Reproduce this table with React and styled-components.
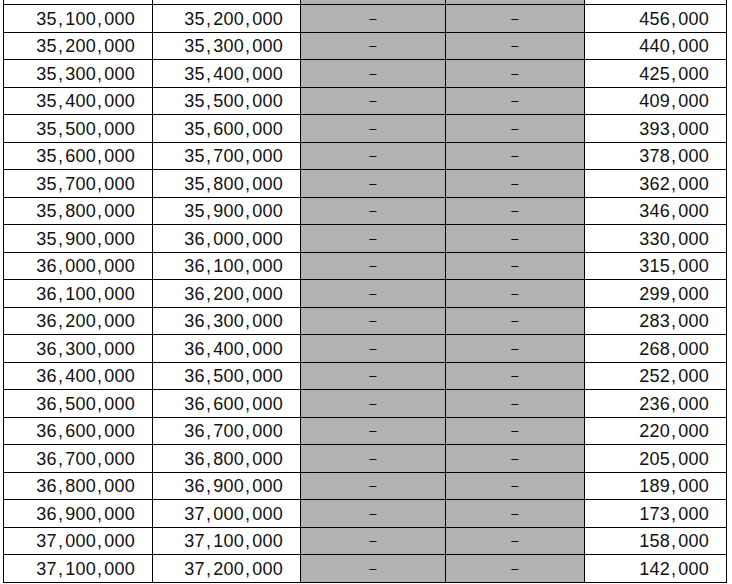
import React from "react";
import styled, { createGlobalStyle } from "styled-components";

const GlobalStyle = createGlobalStyle`
  html, body {
    margin: 0;
    padding: 0;
    background: #ffffff;
    overflow: hidden;
  }
  body {
    font-family: "Liberation Sans", Arial, sans-serif;
  }
`;

const Sheet = styled.div`
  margin-top: -23px;
  margin-left: 3px;
  display: flex;
  flex-direction: column;
  gap: 1px;
  width: fit-content;
  padding: 1px;
  background: #000000;
`;

const Row = styled.div`
  display: grid;
  grid-template-columns: 148px 147px 144px 138px 141px;
  gap: 1px;
  height: ${props => (props.$tall ? 27 : 26)}px;
`;

const Cell = styled.div`
  display: flex;
  align-items: center;
  justify-content: ${props => (props.$blank ? "center" : "flex-end")};
  padding-top: 1px;
  padding-right: ${props => (props.$blank ? 0 : 17)}px;
  background: ${props => (props.$blank ? "#b2b2b2" : "#ffffff")};
  color: #111111;
  font-size: 18px;
  letter-spacing: 0.25px;
  white-space: nowrap;
  overflow: hidden;
`;

const Comma = styled.span`
  margin: 0 2px 0 1px;
`;

const Dash = styled.span`
  font-size: 13px;
  color: #000000;
  margin-top: -2px;
`;

const amounts = [
  472000, 456000, 440000, 425000, 409000, 393000, 378000, 362000, 346000,
  330000, 315000, 299000, 283000, 268000, 252000, 236000, 220000, 205000,
  189000, 173000, 158000, 142000,
];

const Num = ({ value }) => {
  const parts = value.toLocaleString("en-US").split(",");
  return (
    <span>
      {parts.map((p, i) => (
        <React.Fragment key={i}>
          {p}
          {i < parts.length - 1 && <Comma>,</Comma>}
        </React.Fragment>
      ))}
    </span>
  );
};

export default () => {
  return (
    <>
      <GlobalStyle />
      <Sheet>
        {amounts.map((amount, i) => {
          const from = 35000000 + i * 100000;
          return (
            <Row key={from} $tall={i % 2 === 1}>
              <Cell>
                <Num value={from} />
              </Cell>
              <Cell>
                <Num value={from + 100000} />
              </Cell>
              <Cell $blank>
                <Dash>–</Dash>
              </Cell>
              <Cell $blank>
                <Dash>–</Dash>
              </Cell>
              <Cell>
                <Num value={amount} />
              </Cell>
            </Row>
          );
        })}
      </Sheet>
    </>
  );
};
